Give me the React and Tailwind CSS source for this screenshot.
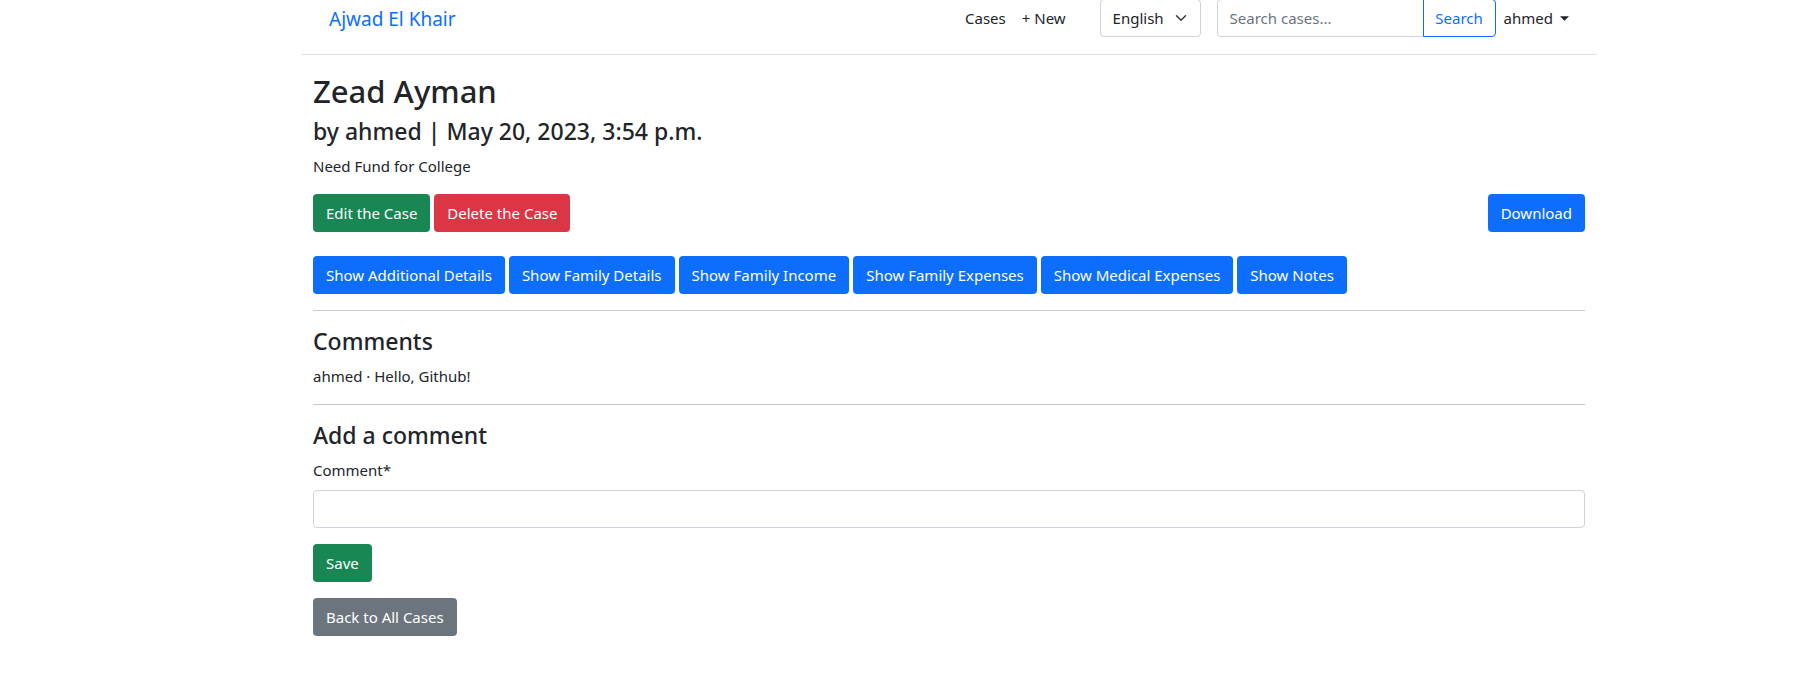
const button = 'h-[38px] rounded border border-transparent px-3 text-[15px] leading-6 whitespace-nowrap text-white'

const sections = [
  'Additional Details',
  'Family Details',
  'Family Income',
  'Family Expenses',
  'Medical Expenses',
  'Notes',
]

function Header() {
  return (
    <header className="-mt-px flex items-start border-b border-[#dee2e6] pr-5 pb-[15px] pl-7">
      <a href="#home" className="mr-auto py-1 text-[19px] leading-8 whitespace-nowrap text-[#0d6efd]">
        Ajwad El Khair
      </a>
      <nav className="flex">
        <a href="#cases" className="px-2 py-[7px] leading-6 whitespace-nowrap">Cases</a>
        <a href="#new" className="px-2 py-[7px] leading-6 whitespace-nowrap">+ New</a>
      </nav>
      <div className="relative ml-[26px] shrink-0">
        <select aria-label="Language" className="h-[38px] w-[101px] appearance-none rounded border border-[#ced4da] bg-white pl-3 leading-6">
          <option>English</option>
        </select>
        <svg aria-hidden="true" viewBox="0 0 16 16" className="pointer-events-none absolute top-[11px] right-[14px] h-4 w-3">
          <path d="M2 5l6 6 6-6" fill="none" stroke="#343a40" strokeWidth="2" strokeLinecap="round" strokeLinejoin="round" />
        </svg>
      </div>
      <form className="ml-4 flex" onSubmit={(e) => e.preventDefault()}>
        <input type="search" aria-label="Search cases" placeholder="Search cases..." className="h-[38px] w-[207px] rounded-l border border-[#ced4da] px-3 leading-6 placeholder:text-[#6c757d] placeholder:opacity-100" />
        <button type="submit" className="-ml-px h-[38px] w-[73px] rounded-r border border-[#0d6efd] text-[#0d6efd]">Search</button>
      </form>
      <button type="button" className="flex items-center px-2 py-[7px] leading-6">
        ahmed
        <svg aria-hidden="true" viewBox="0 0 10 5" className="ml-[7px] h-[5px] w-[9px]">
          <path d="M0 0h10L5 5z" fill="#212529" />
        </svg>
      </button>
    </header>
  )
}

export default function App() {
  return (
    <div className="bg-white pb-12 pl-[88px] font-['Noto_Sans','Open_Sans',sans-serif] text-[15px] leading-6 text-[#212529]">
      <div className="mx-auto max-w-[1296px]">
        <Header />
        <main className="px-3 pt-[17px]">
          <h1 className="mb-[7px] text-[31px] leading-[38px] font-medium">Zead Ayman</h1>
          <h2 className="mb-2 text-[23px] leading-[29px] font-medium">by ahmed | May 20, 2023, 3:54 p.m.</h2>
          <p className="mb-4">Need Fund for College</p>
          <div className="mb-6 flex gap-1">
            <button type="button" className={`${button} bg-[#198754]`}>Edit the Case</button>
            <button type="button" className={`${button} bg-[#dc3545]`}>Delete the Case</button>
            <button type="button" className={`${button} ml-auto bg-[#0d6efd]`}>Download</button>
          </div>
          <div className="flex flex-wrap gap-1">
            {sections.map((name) => (
              <button key={name} type="button" className={`${button} bg-[#0d6efd]`}>Show {name}</button>
            ))}
          </div>
          <hr className="my-4 border-[#c7c8ca]" />
          <h3 className="mb-2 text-[23px] leading-[29px] font-medium">Comments</h3>
          <p>ahmed · Hello, Github!</p>
          <hr className="my-4 border-[#c7c8ca]" />
          <h3 className="mb-2 text-[23px] leading-[29px] font-medium">Add a comment</h3>
          <form onSubmit={(e) => e.preventDefault()}>
            <label htmlFor="comment" className="mb-2 block">Comment*</label>
            <input id="comment" type="text" required className="mb-4 block h-[38px] w-full rounded border border-[#ced4da] px-3" />
            <button type="submit" className={`${button} mb-4 block bg-[#198754]`}>Save</button>
          </form>
          <a href="#cases" className={`${button} inline-block bg-[#6c757d] py-[6px]`}>Back to All Cases</a>
        </main>
      </div>
    </div>
  )
}
